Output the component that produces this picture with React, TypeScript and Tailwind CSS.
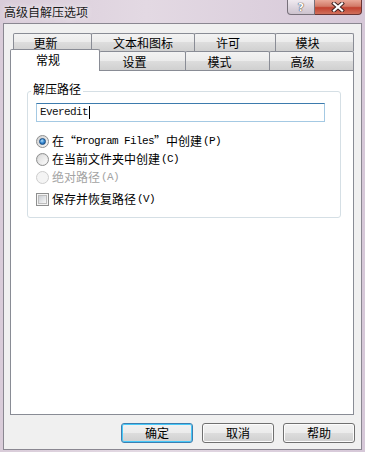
const cjk = "font-['Noto_Sans_CJK_SC',sans-serif]";
const mono = "font-['Liberation_Mono',monospace] text-[11px] tracking-[-0.6px]";
const tabBg =
  "bg-[linear-gradient(#f3f3f3_0%,#ebebeb_50%,#dddddd_50%,#d0d0d0_100%)]";

function TitleBar() {
  return (
    <div className="h-[23px] flex items-start justify-between pl-[4px] pr-[3px]">
      <div className="pt-[4px] leading-[16px] text-[12px] text-[#1b1b1b] [text-shadow:0_0_6px_#ffffff]">
        高级自解压选项
      </div>
      <div className="flex">
        <div className="w-[28px] h-[15px] border border-t-0 border-[#77707a] rounded-bl-[4px] bg-[linear-gradient(#f0eaf0,#ddd5de_50%,#cdc3ce)] flex items-center justify-center">
          <span className="font-['DejaVu_Sans',sans-serif] font-bold text-[11px] leading-none text-white [text-shadow:0_0_1px_#333,0_0_1px_#333]">
            ?
          </span>
        </div>
        <div className="w-[47px] h-[15px] border border-t-0 border-l-0 border-[#6a3434] rounded-br-[4px] bg-[linear-gradient(#e9a898,#d27a68_45%,#c2412f_55%,#d0705c)] flex items-center justify-center">
          <svg width="14" height="10" viewBox="0 0 14 10">
            <path d="M3 1.5 L11 8.5 M11 1.5 L3 8.5" stroke="#3a2020" strokeWidth="4" strokeLinecap="square" />
            <path d="M3 1.5 L11 8.5 M11 1.5 L3 8.5" stroke="#ffffff" strokeWidth="2.2" strokeLinecap="square" />
          </svg>
        </div>
      </div>
    </div>
  );
}

function Tab({ label, w, pad, ml = true, row2 }: { label: string; w: string; pad: string; ml?: boolean; row2?: boolean }) {
  return (
    <div
      className={`${w} ${ml ? "-ml-px" : ""} ${pad} ${row2 ? "pt-[2px]" : ""} h-full border border-b-0 border-[#898c95] rounded-t-[2px] ${tabBg} flex items-center justify-center leading-[16px]`}
    >
      {label}
    </div>
  );
}

function Tabs() {
  return (
    <div className="flex flex-col">
      <div className="h-[18px] flex ml-[3px]">
        <Tab label="更新" w="w-[79px]" pad="pr-[14px]" ml={false} />
        <Tab label="文本和图标" w="w-[104px]" pad="" />
        <Tab label="许可" w="w-[82px]" pad="pr-[14px]" />
        <Tab label="模块" w="w-[79px]" pad="pr-[14px]" />
      </div>
      <div className="h-[19px] flex items-end">
        <div className="relative z-10 w-[90px] h-[22px] -mb-px border border-b-0 border-[#898c95] rounded-t-[2px] bg-white flex items-start justify-center pt-[2px] pr-[14px] leading-[16px]">
          常规
        </div>
        <Tab label="设置" w="w-[87px]" pad="pr-[16px]" row2 />
        <Tab label="模式" w="w-[85px]" pad="pr-[16px]" row2 />
        <Tab label="高级" w="w-[85px]" pad="pr-[18px]" row2 />
      </div>
    </div>
  );
}

function Radio({ checked, disabled }: { checked?: boolean; disabled?: boolean }) {
  return (
    <span
      className={`w-[13px] h-[13px] rounded-full border flex items-center justify-center shrink-0 ${
        disabled
          ? "border-[#cdcdcd] bg-[#f4f4f4]"
          : "border-[#8e8f8f] bg-[linear-gradient(135deg,#d0d0d0,#f6f6f6)]"
      }`}
    >
      {checked ? (
        <span className="w-[7px] h-[7px] rounded-full bg-[radial-gradient(circle_at_40%_35%,#b6e0fb_0%,#3e8fd6_45%,#0d4f96_100%)] border border-[#184c82]" />
      ) : (
        <span className={`w-[9px] h-[9px] rounded-full ${disabled ? "bg-[#f4f4f4]" : "bg-[linear-gradient(135deg,#dcdcdc,#fbfbfb)]"}`} />
      )}
    </span>
  );
}

function Panel() {
  return (
    <div className="w-[344px] h-[345px] border border-[#898c95] bg-white pl-[16px]">
      <fieldset className="mt-[10px] w-[314px] border border-[#d5dfe5] rounded-[3px]">
        <legend className="ml-[3px] px-[2px] leading-[16px] pb-[4px]">解压路径</legend>
        <div className="px-[8px] pb-[9px] flex flex-col">
          <div className="mt-[2px] w-[289px] h-[19px] border border-[#a4c9e3] border-t-[#3d7bad] bg-white flex items-center pl-[3px]">
            <span className="font-['Liberation_Mono',monospace] text-[11px] tracking-[-0.6px] text-[#111]">Everedit</span>
            <span className="ml-[1px] w-px h-[13px] bg-black" />
          </div>
          <div className="mt-[10px] h-[18px] flex items-center gap-[3px]">
            <Radio checked />
            <span className="flex items-center leading-[16px]">
              在“<span className={mono}>Program Files</span>”中创建
              <span className={`${mono} text-[10px] ml-[1px]`}>(P)</span>
            </span>
          </div>
          <div className="h-[18px] flex items-center gap-[3px]">
            <Radio />
            <span className="flex items-center leading-[16px]">
              在当前文件夹中创建
              <span className={`${mono} text-[10px] ml-[1px]`}>(C)</span>
            </span>
          </div>
          <div className="h-[18px] flex items-center gap-[3px] text-[#a3a3a3]">
            <Radio disabled />
            <span className="flex items-center leading-[16px]">
              绝对路径
              <span className={`${mono} text-[10px] ml-[1px]`}>(A)</span>
            </span>
          </div>
          <div className="mt-[4px] h-[18px] flex items-center gap-[3px]">
            <span className="w-[13px] h-[13px] border border-[#8e8f8f] bg-[#f4f4f4] flex items-center justify-center shrink-0">
              <span className="w-[9px] h-[9px] border border-[#bdbdbd] bg-[linear-gradient(135deg,#cbcfd5,#f7f7f7)]" />
            </span>
            <span className="flex items-center leading-[16px]">
              保存并恢复路径
              <span className={`${mono} text-[10px] ml-[1px]`}>(V)</span>
            </span>
          </div>
        </div>
      </fieldset>
    </div>
  );
}

function Btn({ label, isDefault }: { label: string; isDefault?: boolean }) {
  return (
    <div
      className={`w-[72px] h-[20px] rounded-[3px] border flex items-center justify-center leading-[16px] bg-[linear-gradient(#f2f2f2_0%,#ebebeb_50%,#dddddd_50%,#cfcfcf_100%)] ${
        isDefault
          ? "border-[#3c7fb1] shadow-[inset_0_0_0_1px_#48c8f8]"
          : "border-[#707070] shadow-[inset_0_0_0_1px_#fcfcfc]"
      }`}
    >
      {label}
    </div>
  );
}

export default function App() {
  return (
    <div className={`w-[365px] h-[452px] bg-[linear-gradient(90deg,#d9ccd9,#e3d9e3_40%,#d6c8d8)] flex flex-col overflow-hidden text-[12px] text-black ${cjk}`}>
      <TitleBar />
      <div className="mx-[3px] mb-[2px] flex-1 border border-[#8a8791] bg-[#f0f0f0] flex flex-col pl-[6px] pr-[7px] pt-[9px]">
        <Tabs />
        <Panel />
        <div className="mt-[8px] -mr-px flex justify-end gap-[9px]">
          <Btn label="确定" isDefault />
          <Btn label="取消" />
          <Btn label="帮助" />
        </div>
      </div>
    </div>
  );
}
